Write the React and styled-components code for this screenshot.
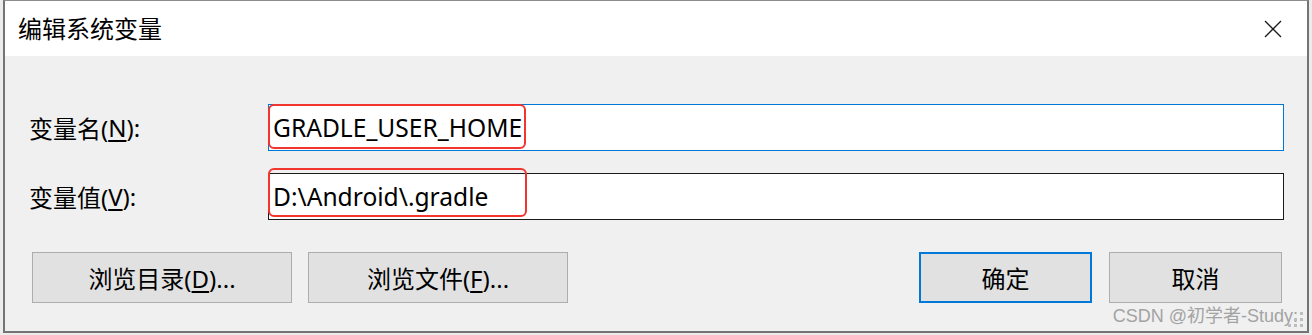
import React from "react";
import styled, { createGlobalStyle } from "styled-components";

const GlobalStyle = createGlobalStyle`
    body {
        margin: 0;
        background: #ececec;
        font-family: "Noto Sans", "Noto Sans CJK SC", sans-serif;
        color: #000;
    }
`;

const gripDots = [[12, 0], [6, 6], [12, 6], [0, 12], [6, 12], [12, 12]];

function App() {
    return (
        <>
            <GlobalStyle />
            <Window>
                <TitleBar>
                    <Title>编辑系统变量</Title>
                    <CloseIcon width="18" height="18" viewBox="0 0 18 18">
                        <path d="M1 1 L17 17 M17 1 L1 17" stroke="#1a1a1a" strokeWidth="1.3" fill="none" />
                    </CloseIcon>
                </TitleBar>
                <Body>
                    <Fields>
                        <Label>变量名(<u>N</u>):</Label>
                        <Field $focused>
                            GRADLE_USER_HOME
                            <RedMark $top={-1} $width={258} $height={45} />
                        </Field>
                        <Label>变量值(<u>V</u>):</Label>
                        <Field>
                            D:\Android\.gradle
                            <RedMark $top={-6} $width={259} $height={49} />
                        </Field>
                    </Fields>
                    <ButtonRow>
                        <ButtonGroup $gap={16}>
                            <Button $width={260}>浏览目录(<u>D</u>)...</Button>
                            <Button $width={260}>浏览文件(<u>F</u>)...</Button>
                        </ButtonGroup>
                        <ButtonGroup $gap={17}>
                            <Button $width={173} $primary>确定</Button>
                            <Button $width={173}>取消</Button>
                        </ButtonGroup>
                    </ButtonRow>
                </Body>
                <Watermark>CSDN @初学者-Study:</Watermark>
                <Grip width="16" height="16" viewBox="0 0 16 16">
                    {gripDots.map(([x, y], i) => (
                        <rect key={i} x={x} y={y} width="3" height="3" fill="#bdbdbd" />
                    ))}
                </Grip>
            </Window>
        </>
    );
}
export default App;

const Window = styled.div`
    position: relative;
    box-sizing: border-box;
    width: 1306px;
    height: 333px;
    margin-left: 3px;
    border: 2px solid #747474;
    border-top: 1px solid #8c8c8c;
    background: #f0f0f0;
    display: flex;
    flex-direction: column;
`
const TitleBar = styled.div`
    height: 55px;
    background: #fff;
    display: flex;
    align-items: center;
    justify-content: space-between;
    padding: 0 25px 0 13px;
`
const Title = styled.div`
    font-size: 24px;
    line-height: 1;
`
const CloseIcon = styled.svg`
    display: block;
`
const Body = styled.div`
    padding: 48px 23px 0 27px;
`
const Fields = styled.div`
    display: grid;
    grid-template-columns: 236px 1fr;
    grid-auto-rows: 47px;
    row-gap: 22px;
`
const Label = styled.div`
    display: flex;
    align-items: center;
    margin-left: -3px;
    font-size: 24px;
    u {
        text-underline-offset: 3px;
    }
`
const Field = styled.div`
    position: relative;
    box-sizing: border-box;
    display: flex;
    align-items: center;
    padding-left: 4px;
    background: #fff;
    border: 1px solid ${p => p.$focused ? "#0078d7" : "#1b1b1b"};
    font-size: 24.6px;
`
const RedMark = styled.div`
    position: absolute;
    left: -1px;
    top: ${p => p.$top}px;
    width: ${p => p.$width}px;
    height: ${p => p.$height}px;
    box-sizing: border-box;
    border: 2px solid #f2352f;
    border-radius: 6px;
`
const ButtonRow = styled.div`
    display: flex;
    justify-content: space-between;
    margin-top: 32px;
    padding: 0 2px 0 0;
`
const ButtonGroup = styled.div`
    display: flex;
    gap: ${p => p.$gap}px;
`
const Button = styled.button`
    box-sizing: border-box;
    width: ${p => p.$width}px;
    height: 51px;
    background: #e1e1e1;
    border: ${p => p.$primary ? "2px solid #0078d7" : "1px solid #adadad"};
    font-family: "Noto Sans", "Noto Sans CJK SC", sans-serif;
    font-size: 24px;
    color: #000;
    padding: 0;
    u {
        text-underline-offset: 3px;
    }
`
const Watermark = styled.div`
    position: absolute;
    right: 9px;
    bottom: 4px;
    font-family: "Liberation Sans", "Noto Sans CJK SC", sans-serif;
    font-size: 18px;
    color: #a3a3a3;
`
const Grip = styled.svg`
    position: absolute;
    right: 3px;
    bottom: 3px;
`
